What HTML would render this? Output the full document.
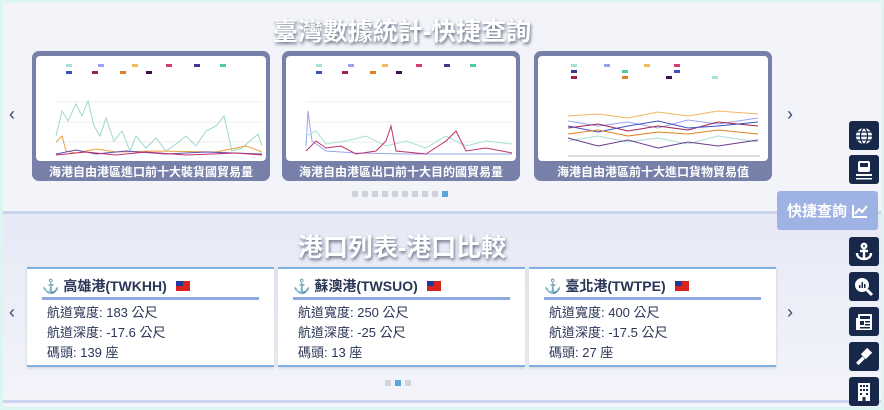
<!DOCTYPE html>
<html><head><meta charset="utf-8"><style>
*{margin:0;padding:0;box-sizing:border-box}
body{width:884px;height:410px;background:#dcf5f3;font-family:"Liberation Sans","Noto Sans CJK TC",sans-serif;position:relative;overflow:hidden}
.main{position:absolute;left:3px;top:3px;right:3px;bottom:3px;background:#f2f4f9}
.sep{position:absolute;left:3px;right:3px;top:211px;height:3px;background:#ccd3ee}
.low{position:absolute;left:3px;right:3px;top:214px;height:187px;background:linear-gradient(#e6e9f6,#f3f4fa)}
.bot{position:absolute;left:3px;right:3px;top:400px;height:3px;background:#ccd3ee}
h1{position:absolute;left:0;width:804px;text-align:center;color:#fff;font-size:25px;font-weight:bold;text-shadow:1px 2px 3px rgba(40,50,80,.7)}
.cc{position:absolute;top:51px;width:238px;height:130px;background:#7680a8;border-radius:7px}
.cc .in{position:absolute;left:4px;top:5px;right:4px;height:105px;background:#fff;border-radius:4px;overflow:hidden}
.cc .cap{position:absolute;left:0;right:0;top:112px;text-align:center;color:#fff;font-size:12px;font-weight:bold;white-space:nowrap}
.dots{position:absolute;display:flex;gap:4px}
.dots i{display:block;width:6px;height:6px;background:#cfd3da}
.dots i.a{background:#5aa4dc}
.arr{position:absolute;color:#3a4668;font-size:18px}
.sb{position:absolute;left:849px;width:30px;height:29px;background:#17284a;border-radius:3px;display:flex;align-items:center;justify-content:center}
.q{position:absolute;left:777px;top:191px;width:101px;height:39px;background:#9fb2e4;border-radius:3px;color:#fff;font-size:15px;font-weight:bold;display:flex;align-items:center;justify-content:center;gap:5px}
.pc{position:absolute;top:267px;width:247px;height:100px;background:#fff;border-top:2px solid #7fb2e2;border-bottom:2px solid #7fb2e2;box-shadow:0 1px 3px rgba(0,0,0,.15)}
.pc .t{position:absolute;left:15px;top:7px;font-size:14px;font-weight:bold;color:#2a3656;display:flex;align-items:center;gap:3px}
.pc .ul{position:absolute;left:15px;right:15px;top:28px;height:3px;background:#8ea8e0}
.pc .l{position:absolute;left:20px;font-size:13px;color:#2a3656}
.flag{display:inline-block;width:14px;height:10px;background:#d8231f;position:relative;margin-left:6px}
.flag:before{content:"";position:absolute;left:0;top:0;width:7px;height:5px;background:#1c3a9c}
</style></head><body>
<div class="main"></div>
<div class="low"></div>
<div class="sep"></div>
<div class="bot"></div>
<h1 style="top:12px;left:0">臺灣數據統計-快捷查詢</h1>
<div class="arr" style="left:9px;top:104px">‹</div>
<div class="arr" style="left:787px;top:104px">›</div>

<div class="cc" style="left:32px"><div class="in"><svg width="230" height="105">
<g><rect x="30" y="8" width="6" height="3" fill="#a8e0d4"/><rect x="62" y="8" width="6" height="3" fill="#9aa4ee"/><rect x="96" y="8" width="6" height="3" fill="#f0b860"/><rect x="130" y="8" width="6" height="3" fill="#d04070"/><rect x="158" y="8" width="6" height="3" fill="#3a3a90"/><rect x="184" y="8" width="6" height="3" fill="#50c8a0"/><rect x="30" y="15" width="6" height="3" fill="#4050c0"/><rect x="56" y="15" width="6" height="3" fill="#a02050"/><rect x="84" y="15" width="6" height="3" fill="#e08020"/><rect x="110" y="15" width="6" height="3" fill="#401050"/></g>
<g stroke="#eee"><line x1="20" y1="46" x2="226" y2="46"/><line x1="20" y1="66" x2="226" y2="66"/><line x1="20" y1="86" x2="226" y2="86"/></g>
<polyline fill="none" stroke="#9ed8c8" points="20,80 26,55 32,65 40,48 46,60 52,45 58,70 64,80 70,62 78,85 86,75 94,95 100,80 110,92 120,82 130,95 140,88 150,80 160,90 170,75 180,70 188,60 196,95 206,92 214,85 222,78 226,90"/>
<polyline fill="none" stroke="#e8a040" points="20,86 26,80 30,95 40,97 60,93 80,96 120,95 180,96 210,90 226,96"/>
<polyline fill="none" stroke="#6050b0" points="20,98 40,94 60,98 90,95 130,98 170,96 226,98"/>
<polyline fill="none" stroke="#c03070" points="20,99 50,96 80,99 110,96 150,99 200,97 226,99"/>
</svg></div><div class="cap">海港自由港區進口前十大裝貨國貿易量</div></div>

<div class="cc" style="left:282px"><div class="in"><svg width="230" height="105">
<g><rect x="30" y="8" width="6" height="3" fill="#a8e0d4"/><rect x="62" y="8" width="6" height="3" fill="#9aa4ee"/><rect x="96" y="8" width="6" height="3" fill="#f0b860"/><rect x="130" y="8" width="6" height="3" fill="#d04070"/><rect x="158" y="8" width="6" height="3" fill="#3a3a90"/><rect x="184" y="8" width="6" height="3" fill="#50c8a0"/><rect x="30" y="15" width="6" height="3" fill="#4050c0"/><rect x="56" y="15" width="6" height="3" fill="#a02050"/><rect x="84" y="15" width="6" height="3" fill="#e08020"/><rect x="110" y="15" width="6" height="3" fill="#401050"/></g>
<g stroke="#eee"><line x1="20" y1="46" x2="226" y2="46"/><line x1="20" y1="66" x2="226" y2="66"/><line x1="20" y1="86" x2="226" y2="86"/></g>
<polyline fill="none" stroke="#9aa4ee" points="20,90 22,55 26,85 40,95 70,97 120,98 226,98"/>
<polyline fill="none" stroke="#a8e0d4" points="20,80 30,75 40,88 60,85 80,80 100,90 120,85 140,92 160,80 180,90 200,85 226,88"/>
<polyline fill="none" stroke="#c03070" points="20,95 30,85 40,92 55,90 70,98 90,95 100,85 105,70 110,95 140,98 160,85 170,75 180,95 200,92 226,97"/>
</svg></div><div class="cap">海港自由港區出口前十大目的國貿易量</div></div>

<div class="cc" style="left:534px"><div class="in"><svg width="230" height="105">
<g><rect x="33" y="8" width="6" height="3" fill="#a8e0d4"/><rect x="66" y="8" width="6" height="3" fill="#9aa4ee"/><rect x="106" y="8" width="6" height="3" fill="#f0b860"/><rect x="136" y="8" width="6" height="3" fill="#d04070"/><rect x="33" y="14" width="6" height="3" fill="#3a3a90"/><rect x="84" y="14" width="6" height="3" fill="#50c8a0"/><rect x="136" y="14" width="6" height="3" fill="#4050c0"/><rect x="33" y="20" width="6" height="3" fill="#a02050"/><rect x="84" y="20" width="6" height="3" fill="#e08020"/><rect x="128" y="20" width="6" height="3" fill="#401050"/><rect x="174" y="20" width="6" height="3" fill="#a8e0d4"/></g>
<polyline fill="none" stroke="#f0b860" points="30,60 60,58 90,62 120,56 150,60 180,55 220,58"/>
<polyline fill="none" stroke="#9aa4ee" points="30,65 60,70 90,66 120,72 150,64 180,68 220,62"/>
<polyline fill="none" stroke="#a02050" points="30,72 60,68 90,75 120,70 150,74 180,66 220,70"/>
<polyline fill="none" stroke="#4050c0" points="30,70 60,76 90,70 120,65 150,72 180,70 220,66"/>
<polyline fill="none" stroke="#e08020" points="30,78 60,74 90,80 120,76 150,78 180,74 220,78"/>
<polyline fill="none" stroke="#a8e0d4" points="30,85 60,80 90,86 120,82 150,88 180,80 220,86"/>
<polyline fill="none" stroke="#6a3a90" points="30,82 60,90 90,84 120,92 150,86 180,90 220,84"/>
<line x1="30" y1="100" x2="222" y2="100" stroke="#bbb"/>
</svg></div><div class="cap">海港自由港區前十大進口貨物貿易值</div></div>

<div class="dots" style="left:352px;top:191px"><i></i><i></i><i></i><i></i><i></i><i></i><i></i><i></i><i></i><i class="a"></i></div>

<div class="sb" style="top:121px"><svg width="18" height="18" viewBox="0 0 18 18"><circle cx="9" cy="9" r="8" fill="#fff"/><g stroke="#17284a" stroke-width="1.3" fill="none"><ellipse cx="9" cy="9" rx="3.5" ry="8"/><line x1="1" y1="9" x2="17" y2="9"/><line x1="2" y1="5" x2="16" y2="5"/><line x1="2" y1="13" x2="16" y2="13"/></g></svg></div>
<div class="sb" style="top:155px"><svg width="18" height="20" viewBox="0 0 18 20"><rect x="3" y="1" width="12" height="11" rx="2" fill="#fff"/><rect x="5" y="3" width="8" height="4" fill="#17284a"/><path d="M1 14h16v2H1zM1 18h16v1.5H1z" fill="#fff"/></svg></div>
<div class="q">快捷查詢 <svg width="16" height="14" viewBox="0 0 16 14"><path d="M1 1v12h14" stroke="#fff" stroke-width="2" fill="none"/><path d="M3 10l4-5 3 3 5-6" stroke="#fff" stroke-width="2" fill="none"/></svg></div>
<div class="sb" style="top:237px"><svg width="18" height="20" viewBox="0 0 18 20"><g stroke="#fff" stroke-width="2.4" fill="none"><circle cx="9" cy="4" r="2.2"/><line x1="9" y1="6" x2="9" y2="17"/><path d="M2 11c0 4 3 6 7 6s7-2 7-6"/><line x1="5" y1="9" x2="13" y2="9"/></g></svg></div>
<div class="sb" style="top:272px"><svg width="20" height="20" viewBox="0 0 20 20"><circle cx="8" cy="8" r="7" fill="#fff"/><line x1="13" y1="13" x2="18" y2="18" stroke="#fff" stroke-width="3"/><g fill="#17284a"><rect x="5" y="8" width="1.5" height="3"/><rect x="7.5" y="5" width="1.5" height="6"/><rect x="10" y="7" width="1.5" height="4"/></g></svg></div>
<div class="sb" style="top:307px"><svg width="18" height="18" viewBox="0 0 18 18"><rect x="3" y="1" width="14" height="16" rx="1" fill="#fff"/><rect x="1" y="5" width="2" height="12" fill="#fff"/><g fill="#17284a"><rect x="5" y="3" width="10" height="3"/><rect x="5" y="8" width="4" height="4"/><rect x="10" y="8" width="5" height="1.5"/><rect x="10" y="11" width="5" height="1.5"/><rect x="5" y="14" width="10" height="1.5"/></g></svg></div>
<div class="sb" style="top:342px"><svg width="18" height="18" viewBox="0 0 18 18"><g fill="#fff"><rect x="8" y="1" width="7" height="9" transform="rotate(45 11.5 5.5)"/><rect x="1" y="11" width="9" height="3.5" transform="rotate(-45 5.5 12.75)"/></g></svg></div>
<div class="sb" style="top:377px"><svg width="16" height="20" viewBox="0 0 16 20"><rect x="2" y="1" width="12" height="18" fill="#fff"/><g fill="#17284a"><rect x="4" y="3" width="2" height="2"/><rect x="7" y="3" width="2" height="2"/><rect x="10" y="3" width="2" height="2"/><rect x="4" y="7" width="2" height="2"/><rect x="7" y="7" width="2" height="2"/><rect x="10" y="7" width="2" height="2"/><rect x="4" y="11" width="2" height="2"/><rect x="10" y="11" width="2" height="2"/><rect x="6.5" y="15" width="3" height="4"/></g></svg></div>

<h1 style="top:228px">港口列表-港口比較</h1>
<div class="arr" style="left:9px;top:302px">‹</div>
<div class="arr" style="left:787px;top:302px">›</div>

<div class="pc" style="left:27px"><div class="t">⚓ 高雄港(TWKHH)<span class="flag"></span></div><div class="ul"></div>
<div class="l" style="top:33px">航道寬度: 183 公尺</div><div class="l" style="top:53px">航道深度: -17.6 公尺</div><div class="l" style="top:73px">碼頭: 139 座</div></div>
<div class="pc" style="left:278px"><div class="t">⚓ 蘇澳港(TWSUO)<span class="flag"></span></div><div class="ul"></div>
<div class="l" style="top:33px">航道寬度: 250 公尺</div><div class="l" style="top:53px">航道深度: -25 公尺</div><div class="l" style="top:73px">碼頭: 13 座</div></div>
<div class="pc" style="left:529px"><div class="t">⚓ 臺北港(TWTPE)<span class="flag"></span></div><div class="ul"></div>
<div class="l" style="top:33px">航道寬度: 400 公尺</div><div class="l" style="top:53px">航道深度: -17.5 公尺</div><div class="l" style="top:73px">碼頭: 27 座</div></div>

<div class="dots" style="left:385px;top:380px"><i></i><i class="a"></i><i></i></div>
</body></html>
